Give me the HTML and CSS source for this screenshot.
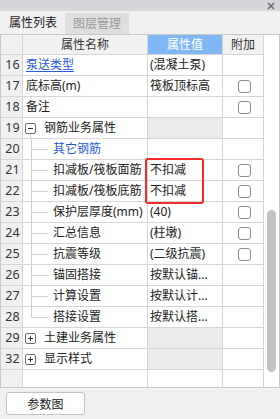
FILE: index.html
```html
<!DOCTYPE html>
<html>
<head>
<meta charset="utf-8">
<link rel="stylesheet" href="styles.css">
</head>
<body>
<div class="topbar">
  <svg class="close" width="8" height="8" viewBox="0 0 8 8"><path d="M1 1L7 7M7 1L1 7" stroke="#6a6a6a" stroke-width="1.6"/></svg>
</div>
<div class="tabs">
  <div class="tab active">属性列表</div>
  <div class="tab">图层管理</div>
</div>
<div class="panel">
  <div class="grid">
    <div class="c hd num"></div><div class="c hd">属性名称</div><div class="c hd val">属性值</div><div class="c hd">附加</div>

    <div class="c num">16</div><div class="c name"><span class="link">泵送类型</span></div><div class="c v">(混凝土泵)</div><div class="c add"></div>
    <div class="c num">17</div><div class="c name">底标高(m)</div><div class="c v">筏板顶标高</div><div class="c add"><span class="cb"></span></div>
    <div class="c num">18</div><div class="c name">备注</div><div class="c v"></div><div class="c add"><span class="cb"></span></div>
    <div class="c num">19</div><div class="c name"><span class="tog minus open"></span><span class="gt">钢筋业务属性</span></div><div class="c v grey"></div><div class="c add"></div>
    <div class="c num">20</div><div class="c name"><span class="guide"></span><span class="blue">其它钢筋</span></div><div class="c v"></div><div class="c add"></div>
    <div class="c num">21</div><div class="c name"><span class="guide"></span><span class="t">扣减板/筏板面筋</span></div><div class="c v">不扣减</div><div class="c add"><span class="cb"></span></div>
    <div class="c num">22</div><div class="c name"><span class="guide"></span><span class="t">扣减板/筏板底筋</span></div><div class="c v">不扣减</div><div class="c add"><span class="cb"></span></div>
    <div class="c num">23</div><div class="c name"><span class="guide"></span><span class="t">保护层厚度(mm)</span></div><div class="c v">(40)</div><div class="c add"><span class="cb"></span></div>
    <div class="c num">24</div><div class="c name"><span class="guide"></span><span class="t">汇总信息</span></div><div class="c v">(柱墩)</div><div class="c add"><span class="cb"></span></div>
    <div class="c num">25</div><div class="c name"><span class="guide"></span><span class="t">抗震等级</span></div><div class="c v">(二级抗震)</div><div class="c add"><span class="cb"></span></div>
    <div class="c num">26</div><div class="c name"><span class="guide"></span><span class="t">锚固搭接</span></div><div class="c v">按默认锚...</div><div class="c add"></div>
    <div class="c num">27</div><div class="c name"><span class="guide"></span><span class="t">计算设置</span></div><div class="c v">按默认计...</div><div class="c add"></div>
    <div class="c num">28</div><div class="c name"><span class="guide last"></span><span class="t">搭接设置</span></div><div class="c v">按默认搭...</div><div class="c add"></div>
    <div class="c num">29</div><div class="c name"><span class="tog plus"></span><span class="gt">土建业务属性</span></div><div class="c v grey"></div><div class="c add"></div>
    <div class="c num">32</div><div class="c name"><span class="tog plus"></span><span class="gt">显示样式</span></div><div class="c v grey"></div><div class="c add"></div>
    <div class="c num"></div><div class="c name"></div><div class="c v"></div><div class="c add"></div>
  </div>
  <div class="scroll"><div class="thumb"></div></div>
  <div class="highlight"></div>
</div>
<div class="footer"><button class="btn">参数图</button></div>
</body>
</html>
```
FILE: styles.css
```css
* { box-sizing: border-box; }
html, body { margin: 0; padding: 0; }
body {
  width: 280px; height: 419px; overflow: hidden;
  background: #f0f0f0;
  font-family: "Noto Sans", "Noto Sans CJK SC", sans-serif;
  font-size: 12px; color: #222;
}
.topbar {
  height: 11px; background: #d6d6da;
  display: flex; justify-content: flex-end; align-items: center;
  padding-right: 5px;
}
.close { display: block; margin-top: 1px; }
.tabs {
  height: 23px; display: flex; align-items: flex-end; background: #f0f0f0;
}
.tab {
  height: 21px; line-height: 21px; padding: 0 8px;
  background: #dedede; color: #9a9a9a; margin-left: 2px;
}
.tab.active {
  height: 23px; line-height: 23px; background: #f0f0f0; color: #222; margin-left: 0; padding: 0 6px 0 9px;
}
.panel {
  position: relative;
  height: 354px; width: 280px;
  border: 1px solid #c8c8c8;
  background: #fff;
  display: flex; overflow: hidden;
}
.grid {
  display: grid;
  grid-template-columns: 22px 125px 75px 41px;
  grid-template-rows: 20px;
  grid-auto-rows: 21px;
  width: 263px; flex: none;
}
.c {
  border-right: 1px solid #d6d6d6;
  border-bottom: 1px solid #d6d6d6;
  display: flex; align-items: center;
  white-space: nowrap; overflow: hidden;
  line-height: 16px;
}
.hd { background: #f1f1f1; justify-content: center; color: #333; }
.hd.val { background: #80b8f6; color: #fff; }
.num { background: #f0f0f0; justify-content: center; color: #333; font-size: 12.5px; padding-left: 2px; }
.name { padding-left: 3px; }
.v { padding-left: 2px; }
.grey { background: #ebebeb; }
.add { justify-content: center; padding-left: 2px; }
.cb {
  width: 13px; height: 13px; border: 1px solid #8c8c8c; border-radius: 3px; background: #fff;
}
.link { color: #2a5bd8; text-decoration: underline; text-underline-offset: 2px; }
.blue { color: #2a5bd8; margin-left: 6px; }
.t { margin-left: 6px; }
.gt { margin-left: 8px; }
.tog {
  position: relative;
  width: 11px; height: 11px; border: 1px solid #6e6e6e; border-radius: 2px;
  margin-left: -1px; margin-top: 1px; flex: none; background: #fff;
}
.tog::before {
  content: ""; position: absolute; left: 2px; top: 4px; width: 5px; height: 1px; background: #333;
}
.tog.plus::after {
  content: ""; position: absolute; left: 4px; top: 2px; width: 1px; height: 5px; background: #333;
}
.tog.open::after {
  content: ""; position: absolute; left: 4px; top: 10px; width: 1px; height: 5px; background: #d0d0d0;
}
.guide {
  align-self: stretch; width: 16px; flex: none; margin-left: 5px;
  border-left: 1px solid #d0d0d0; position: relative; margin-bottom: -1px;
}
.guide::after {
  content: ""; position: absolute; left: 0; top: 10px; width: 16px; height: 1px; background: #d0d0d0;
}
.guide.last { align-self: flex-start; height: 11px; margin-bottom: 0; }
.scroll { flex: 1; padding-top: 175px; padding-left: 3px; }
.thumb { width: 9px; height: 162px; background: #c3c3c3; border-radius: 5px; }
.highlight {
  position: absolute; left: 144px; top: 123px; width: 59px; height: 46px;
  border: 2px solid #f52a2a; border-radius: 3px;
}
.footer { padding: 4px 0 0 6px; }
.btn {
  width: 79px; height: 23px; background: #fff; border: 1px solid #c4c4c4; border-radius: 3px;
  font-family: "Noto Sans CJK SC", sans-serif; font-size: 12px; color: #222; padding: 0;
}
```
